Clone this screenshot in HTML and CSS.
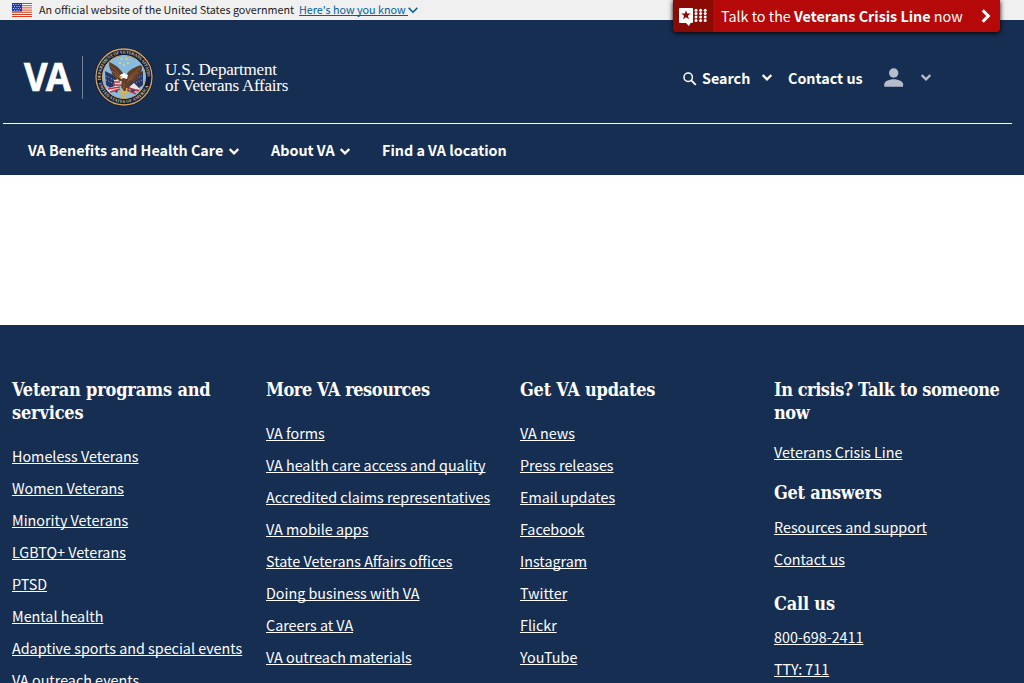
FILE: index.html
```html
<!DOCTYPE html>
<html lang="en">
<head>
<meta charset="utf-8">
<title>VA.gov</title>
<link rel="stylesheet" href="styles.css">
</head>
<body>
<div class="gov-banner">
  <svg class="flag" width="20" height="14" viewBox="0 0 20 14"><path fill="#fff" d="M0 0h20v14H0z"/><path stroke="#db3e1f" stroke-width="1" d="M0 .5h20M0 2.700h20M0 4.900h20M0 7.100h20M0 9.300h20M0 11.500h20M0 13.500h20"/><path fill="#1e33b1" d="M0 0h10v8.500H0z"/><path stroke="#fff" stroke-width=".8" stroke-dasharray="1 1.400" d="M1 1.500h8M2 3.500h7M1 5.500h8M2 7.300h7"/></svg>
  <span class="gov-text">An official website of the United States government</span>
  <a class="gov-link" href="#">Here's how you know </a>
  <svg class="gov-chevron" width="10" height="7" viewBox="0 0 10 7"><path d="M.7.900 5 5.200 9.300.900" fill="none" stroke="#005ea2" stroke-width="1.500"/></svg>
</div>
<a class="crisis" href="#">
  <span class="crisis-icon"><svg width="28" height="18" viewBox="0 0 28 18"><path fill="#fff" d="M1 0h12q1 0 1 1v13q0 1-1 1h-1.500L10 18l-3-3H1q-1 0-1-1V1q0-1 1-1z"/><path fill="#8b0a03" d="m7 2.200 1.200 3.400h3.600L8.900 7.800 10 11.300 7 9.200 4 11.300l1.100-3.500-2.900-2.200h3.600z"/><g fill="#fff"><circle cx="17" cy="2.200" r="1.500"/><circle cx="21.600" cy="2.200" r="1.500"/><circle cx="26.200" cy="2.200" r="1.500"/><circle cx="17" cy="5.600" r="1.500"/><circle cx="21.600" cy="5.600" r="1.500"/><circle cx="26.200" cy="5.600" r="1.500"/><circle cx="17" cy="9" r="1.500"/><circle cx="21.600" cy="9" r="1.500"/><circle cx="26.200" cy="9" r="1.500"/><circle cx="17" cy="12.400" r="1.500"/><circle cx="21.600" cy="12.400" r="1.500"/><circle cx="26.200" cy="12.400" r="1.500"/></g></svg></span>
  <span class="crisis-text">Talk to the <b>Veterans Crisis Line</b> now</span>
  <svg class="crisis-arrow" width="10" height="14" viewBox="0 0 10 14"><path d="m1.700 1.400 5.600 5.600-5.600 5.600" fill="none" stroke="#fff" stroke-width="3"/></svg>
</a>
<header class="header">
  <div class="header-top">
    <a class="logo" href="#">
      <span class="logo-va">VA</span>
      <span class="logo-rule"></span>
      <svg class="seal" width="60" height="60" viewBox="0 0 60 60">
        <defs><path id="arc-top" d="M6.800 33A23.400 23.400 0 1 1 53.200 33"/><path id="arc-bottom" d="M4.800 36A25.900 25.900 0 0 0 55.200 36"/><clipPath id="disc"><circle cx="30" cy="30" r="21"/></clipPath></defs>
        <circle cx="30" cy="30" r="29" fill="#101e40" stroke="#111b30" stroke-width="1"/>
        <circle cx="30" cy="30" r="28" fill="none" stroke="#d5a45c" stroke-width="1.300"/>
        <circle cx="30" cy="30" r="21.500" fill="#87bbdf" stroke="#d2ad72" stroke-width="1"/>
        <text class="seal-text"><textPath href="#arc-top" textLength="76">DEPARTMENT OF VETERANS AFFAIRS</textPath></text>
        <text class="seal-text"><textPath href="#arc-bottom" textLength="66">UNITED STATES OF AMERICA</textPath></text>
        <g clip-path="url(#disc)">
          <path fill="#263667" d="m11 24 10 5 5 8-3 9-11-8zM49 24l-10 5-5 8 4 9 11-8z"/>
          <path stroke="#d9dde5" stroke-width=".8" stroke-dasharray=".8 2" d="m12 29 10 5M12 33l9 4M48 29l-10 5M48 33l-9 4"/>
          <path fill="#e9e5e5" d="m20 33 7-1-1 10-11 4-3-4 9-3zM40 36l-5 4 4 3 7-1z"/>
          <path stroke="#c3343e" stroke-width="1.400" d="m20 35 6 0M19 38l8 0M14 42l12-2M16 45l10-3M35 41l10 3M33 43l9 4"/>
          <path fill="#603d2b" d="M31 31c-2-7-7-12-16-16 0 5 1 8 3 10-1 1 0 3 2 4 0 2 2 3 4 3 0 2 2 2 4 2l-1 6 3 4h4l3-8c5-1 7-3 7-6 3-2 4-5 4-12-9 2-15 6-17 13z"/>
          <path stroke="#98643a" stroke-width=".8" fill="none" d="m17 19 11 11M18 24l10 7M21 28l8 5M46 21 34 31M44 25l-10 8M40 30l-7 5M30 36v6"/>
          <path fill="#fff" d="m26 28 4-2 4 2-1 4-4-1-2 1z"/><path fill="#d9a02d" d="m25 29 3 0-1 3z"/>
          <path stroke="#ddb14c" stroke-width="1.500" d="m27 41 2 9M33 41l-2 9M25 45l10 1"/>
        </g>
        <g fill="#eed36b"><circle cx="26" cy="16" r="1"/><circle cx="34" cy="16" r="1"/><circle cx="30" cy="18" r="1"/><circle cx="27.500" cy="12" r="1"/><circle cx="32.500" cy="12" r="1"/></g>
      </svg>
      <span class="logo-name"><span>U.S. Department</span><span class="logo-second">of Veterans Affairs</span></span>
    </a>
    <div class="tools">
      <svg class="search" width="14" height="14" viewBox="0 0 14 14"><circle cx="5.200" cy="5.200" r="4.200" fill="none" stroke="#fff" stroke-width="1.500"/><path d="m8.300 8.300 4.500 4.500" stroke="#fff" stroke-width="1.900"/></svg>
      <span class="tool-search">Search</span>
      <svg class="chev chev-search" width="10" height="7" viewBox="0 0 10 7"><path d="m.7 1.100 4.300 4.300 4.300-4.300"/></svg>
      <span class="tool-contact">Contact us</span>
      <svg class="person" width="20" height="19" viewBox="0 0 20 19"><circle cx="9.700" cy="5" r="4.700"/><path d="M.3 18.700v-2.500c0-3.400 6.200-4.900 9.400-4.900s9.400 1.500 9.400 4.900v2.500z"/></svg>
      <svg class="chev chev-person" width="10" height="7" viewBox="0 0 10 7"><path d="m.7 1.100 4.300 4.300 4.300-4.300"/></svg>
    </div>
  </div>
  <nav class="nav">
    <a class="nav-benefits" href="#">VA Benefits and Health Care</a>
    <svg class="chev" width="10" height="7" viewBox="0 0 10 7"><path d="m.7 1.100 4.300 4.300 4.300-4.300"/></svg>
    <a class="nav-about" href="#">About VA</a>
    <svg class="chev" width="10" height="7" viewBox="0 0 10 7"><path d="m.7 1.100 4.300 4.300 4.300-4.300"/></svg>
    <a class="nav-find" href="#">Find a VA location</a>
  </nav>
</header>
<main class="content"></main>
<footer class="footer">
  <section class="col col-programs">
    <h2>Veteran programs and<br>services</h2>
    <ul>
      <li><a href="#">Homeless Veterans</a></li>
      <li><a href="#">Women Veterans</a></li>
      <li><a href="#">Minority Veterans</a></li>
      <li><a href="#">LGBTQ+ Veterans</a></li>
      <li><a href="#">PTSD</a></li>
      <li><a href="#">Mental health</a></li>
      <li><a href="#">Adaptive sports and special events</a></li>
      <li><a href="#">VA outreach events</a></li>
    </ul>
  </section>
  <section class="col col-resources">
    <h2>More VA resources</h2>
    <ul>
      <li><a href="#">VA forms</a></li>
      <li><a href="#">VA health care access and quality</a></li>
      <li><a href="#">Accredited claims representatives</a></li>
      <li><a href="#">VA mobile apps</a></li>
      <li><a href="#">State Veterans Affairs offices</a></li>
      <li><a href="#">Doing business with VA</a></li>
      <li><a href="#">Careers at VA</a></li>
      <li><a href="#">VA outreach materials</a></li>
    </ul>
  </section>
  <section class="col col-updates">
    <h2>Get VA updates</h2>
    <ul>
      <li><a href="#">VA news</a></li>
      <li><a href="#">Press releases</a></li>
      <li><a href="#">Email updates</a></li>
      <li><a href="#">Facebook</a></li>
      <li><a href="#">Instagram</a></li>
      <li><a href="#">Twitter</a></li>
      <li><a href="#">Flickr</a></li>
      <li><a href="#">YouTube</a></li>
    </ul>
  </section>
  <section class="col col-help">
    <h2 class="in-crisis">In crisis? Talk to someone<br>now</h2>
    <ul><li><a href="#">Veterans Crisis Line</a></li></ul>
    <h2 class="answers">Get answers</h2>
    <ul>
      <li><a href="#">Resources and support</a></li>
      <li><a href="#">Contact us</a></li>
    </ul>
    <h2 class="call">Call us</h2>
    <ul>
      <li><a href="#">800-698-2411</a></li>
      <li><a href="#">TTY: 711</a></li>
    </ul>
  </section>
</footer>
</body>
</html>
```
FILE: styles.css
```css
* { box-sizing: border-box; }
body {
  margin: 0;
  height: 683px;
  overflow: hidden;
  background: #fff;
  color: #fff;
  font-family: "Noto Sans CJK SC", "Open Sans", sans-serif;
  font-size: 14.33px;
  white-space: nowrap;
}
a { color: inherit; text-decoration: none; text-decoration-skip-ink: none; }
svg { display: block; flex: none; }

.gov-banner {
  display: flex;
  align-items: center;
  height: 20px;
  padding-left: 12px;
  background: #f0f0f0;
  color: #1b1b1b;
  font-size: 10.75px;
  line-height: 18px;
}
.flag { margin: 0 7px 0 0; }
.gov-text { width: 260px; }
.gov-link {
  width: 109px;
  color: #005ea2;
  white-space: pre;
  text-decoration: underline;
  text-underline-offset: 1px;
}

.crisis {
  position: absolute;
  top: 0;
  left: 673px;
  display: flex;
  align-items: center;
  width: 327px;
  height: 32px;
  background: #b50909;
  border-radius: 0 0 4px 4px;
  box-shadow: 0 1px 5px #000;
  line-height: 32px;
}
.crisis-icon {
  width: 40px;
  height: 32px;
  padding: 8px 0 0 6px;
  background: #8b0a03;
  border-radius: 0 0 0 4px;
}
.crisis-text { width: 260px; padding-left: 8px; }
.crisis-arrow { margin-left: 8px; }

.header { height: 155px; background: #162e51; }
.header-top {
  display: flex;
  justify-content: space-between;
  height: 104px;
  margin: 0 12px 0 3px;
  border-bottom: 1px solid #fff;
}
.logo { display: flex; padding-left: 21px; }
.logo-va {
  width: 58px;
  height: 78px;
  padding-top: 35px;
  font: bold 40px/42px "Open Sans", sans-serif;
  letter-spacing: -2px;
  -webkit-text-stroke: .7px #fff;
  transform: scaleX(.91);
  transform-origin: left;
}
.logo-rule { width: 1px; height: 43px; margin: 36px 12px 0 0; background: #71809a; }
.seal { margin: 27px 10px 0 -1px; }
.seal-text { fill: #d8c18b; font: bold 4.3px "Liberation Serif", serif; }
.logo-name {
  display: flex;
  flex-direction: column;
  margin-left: 1px;
  padding-top: 41px;
  font: 17px/17px "Liberation Serif", serif;
  letter-spacing: -.2px;
}
.logo-second { line-height: 16px; letter-spacing: -.25px; }
.tools {
  display: flex;
  align-items: center;
  height: 24px;
  margin: 45px 81px 0 0;
  font-weight: 700;
}
.search { margin: 4px 5px 0 0; }
.tool-search { width: 60px; }
.tool-contact { width: 96px; margin-left: 16px; }
.chev path { fill: none; stroke: currentColor; stroke-width: 2.2; }
.person { fill: #b8bdcc; }
.chev-person { margin-left: 17px; color: #b8bdcc; }
.nav {
  display: flex;
  align-items: center;
  height: 51px;
  padding: 0 0 1px 28px;
  font-weight: 700;
}
.nav .chev { margin-top: 4px; }
.nav-benefits { width: 201px; }
.nav-about { width: 69px; margin-left: 32px; }
.nav-find { margin-left: 32px; }

.content { height: 150px; }

.footer {
  display: grid;
  grid-template-columns: repeat(4, 230px);
  gap: 24px;
  height: 358px;
  padding: 53px 12px 0;
  background: #162e51;
}
.col h2 {
  margin: 0;
  font: bold 18px/23px "DejaVu Serif Condensed", "DejaVu Serif", serif;
}
.col-programs h2 { letter-spacing: -.17px; }
.col-resources h2 { letter-spacing: -.43px; }
.col-updates h2 { letter-spacing: -.23px; }
.col-help .in-crisis { letter-spacing: -.45px; }
.col-help .answers { letter-spacing: -.27px; }
.col-help .call { letter-spacing: -.45px; }
.col ul { margin: 16px 0 0; padding: 0; list-style: none; }
.col li { height: 32px; line-height: 32px; }
.col li a { text-decoration: underline; text-decoration-thickness: 1px; text-underline-offset: 1px; }
.col-help ul { margin: 12px 0 13px; }
.col-help .answers + ul { margin: 7px 0 17px; }
.col-help .call { letter-spacing: -.2px; }
.col-help .call + ul { margin-top: 6px; }
```
